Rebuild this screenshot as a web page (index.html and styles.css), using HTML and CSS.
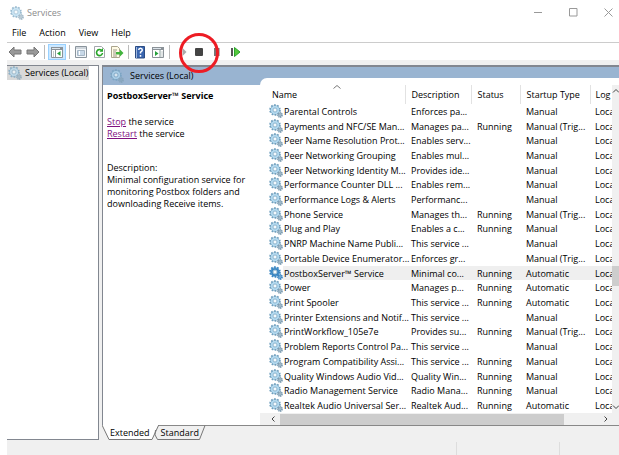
FILE: index.html
```html
<!DOCTYPE html>
<html lang="en">
<head>
  <meta charset="UTF-8" />
  <meta name="viewport" content="width=device-width, initial-scale=1.0"/>
  <title>Services</title>
  <link rel="stylesheet" href="styles.css">
</head>
<body>

<svg class="symbols" aria-hidden="true">
  <symbol id="gear" viewBox="0 0 14 14">
    <circle class="teeth" cx="6" cy="6" r="4.9" fill="none" stroke-width="1.8" stroke-dasharray="1.7 1.38"/>
    <circle class="teeth" cx="6" cy="6" r="4.3" fill="none" stroke-width=".8"/>
    <circle class="ring" cx="6" cy="6" r="3.2" fill="none" stroke-width="1.8"/>
    <circle class="hole" cx="6" cy="6" r="2"/>
    <circle class="small" cx="11" cy="11" r="2" fill="none" stroke-width="1.8" stroke-dasharray="1.2 .4"/>
    <circle class="small" cx="11" cy="11" r="1.1" fill="none" stroke-width="1"/>
  </symbol>
</svg>

<div class="window">
  <header class="title-bar">
    <svg class="gear pale"><use href="#gear"/></svg>
    <h1>Services</h1>
    <div class="window-buttons">
      <button aria-label="Minimize"><svg viewBox="0 0 9 9"><path d="M0 4.5h8"/></svg></button>
      <button aria-label="Maximize"><svg viewBox="0 0 9 9"><path d="M.5.5h7.500v7.500h-7.500z"/></svg></button>
      <button aria-label="Close"><svg viewBox="0 0 9 9"><path d="M.5.5l8 8M8.500.5l-8 8"/></svg></button>
    </div>
  </header>

  <nav class="menu">
    <button>File</button>
    <button>Action</button>
    <button>View</button>
    <button>Help</button>
  </nav>

  <div class="toolbar">
    <button aria-label="Back"><svg viewBox="0 0 14 14"><path d="M1 7l5-5v3h7v4H6v3z" fill="#999" stroke="#777"/></svg></button>
    <button aria-label="Forward"><svg viewBox="0 0 14 14"><path d="M13 7L8 2v3H1v4h7v3z" fill="#999" stroke="#777"/></svg></button>
    <span class="sep"></span>
    <button class="active" aria-label="Show console tree"><svg viewBox="0 0 14 14"><path d="M1.500 2.500h11v10h-11z" fill="#fff" stroke="#8b9298"/><path d="M1 2h12v3H1z" fill="#8b9298"/><path d="M2 3.500h8" stroke="#dce4ea"/><path d="M5.500 5v7M3 7h1M3 9h1M3 11h1" stroke="#899"/><path d="M10.500 6v5L7 8.500z" fill="#25a13b"/></svg></button>
    <span class="sep"></span>
    <button aria-label="Properties"><svg viewBox="0 0 14 14"><path d="M1.500 1.500h11v11h-11z" fill="#f5f8fb" stroke="#8a949c"/><path d="M2 3h10" stroke="#a8b2bb"/><path d="M3.500 5.500h7v5h-7z" fill="#fff" stroke="#a5b6c5"/><path d="M4 7h1m1 0h4M4 9h1m1 0h4" stroke="#8fb0cf"/></svg></button>
    <button aria-label="Refresh"><svg viewBox="0 0 14 14"><path d="M2.500 1.500h7l3 3v8h-10z" fill="#fff" stroke="#a4a8ac"/><path d="M9.500 5.300A3 3 0 1 0 10.500 8" fill="none" stroke="#28a528" stroke-width="1.600"/><path d="M7.500 6.800h3.500V3z" fill="#28a528"/></svg></button>
    <button aria-label="Export list"><svg viewBox="0 0 14 14"><path d="M1.500 1.500h6l2 2v9h-8z" fill="#fffbe6" stroke="#aaa48d"/><path d="M3 5h4M3 7h3M3 9h3M3 11h4" stroke="#9a958a"/><path d="M6 7h4V4.500L13.500 8 10 11.500V9.500H6z" fill="#42b33d"/></svg></button>
    <span class="sep"></span>
    <button aria-label="Help"><svg viewBox="0 0 14 14"><path d="M2.500 1.500h9v11.500h-9z" fill="#3a66b0" stroke="#2c4c83"/><path d="M3.500 2v11" stroke="#9fb6dc"/><path d="M5.700 5Q5.800 3.200 7.500 3.200T9.300 5Q9.300 6.200 7.500 7.200V8.500M7.500 10v1.700" fill="none" stroke="#fff" stroke-width="1.500"/></svg></button>
    <button aria-label="Show action pane"><svg viewBox="0 0 14 14"><path d="M1.500 2.500h11v10h-11z" fill="#fff" stroke="#8b9298"/><path d="M1 2h12v3H1z" fill="#8b9298"/><path d="M2 3.500h8" stroke="#dce4ea"/><path d="M9 5v7M10.500 7h1M10.500 9h1M10.500 11h1" stroke="#899"/><path d="M4 6v5l3.500-2.500z" fill="#25a13b"/></svg></button>
    <span class="sep"></span>
    <button aria-label="Start service"><svg viewBox="0 0 14 14"><path d="M8.500 3v8l4-4z" fill="#aaa"/></svg></button>
    <button aria-label="Stop service" class="stop"><svg viewBox="0 0 14 14"><rect x="3" y="3" width="8" height="8" rx="1" fill="#444"/></svg><span class="mark"></span></button>
    <button aria-label="Pause service"><svg viewBox="0 0 14 14"><path d="M5 3v8M8.500 3v8" stroke="#777" stroke-width="2"/></svg></button>
    <button aria-label="Restart service"><svg viewBox="0 0 14 14"><path d="M4 3v8" stroke="#555" stroke-width="2"/><path d="M6.500 2.500v9L12 7z" fill="#55c93c" stroke="#2ca32c"/></svg></button>
  </div>

  <main class="console">
    <aside class="tree">
      <div class="tree-item"><svg class="gear pale"><use href="#gear"/></svg>Services (Local)</div>
    </aside>

    <section class="content">
      <div class="view">
        <div class="banner"><svg class="gear pale"><use href="#gear"/></svg>Services (Local)</div>
        <div class="details">
          <h2>PostboxServer™ Service</h2>
          <p class="actions"><a href="#">Stop</a> the service<br><a href="#">Restart</a> the service</p>
          <p>Description:<br>Minimal configuration service for monitoring Postbox folders and downloading Receive items.</p>
        </div>

        <div class="list">
          <div class="list-body">
            <div class="rows">
              <table>
                <colgroup>
                  <col class="col-name"><col class="col-desc"><col class="col-status"><col class="col-type"><col>
                </colgroup>
                <thead>
                  <tr><th>Name<svg class="sort" viewBox="0 0 8 4"><path d="M.5 3.500L4 .5l3.500 3"/></svg></th><th>Description</th><th>Status</th><th>Startup Type</th><th>Log</th></tr>
                </thead>
                <tbody>
                  <tr><td><svg class="gear"><use href="#gear"/></svg>Parental Controls</td><td>Enforces pa...</td><td></td><td>Manual</td><td>Loca</td></tr>
                  <tr><td><svg class="gear"><use href="#gear"/></svg>Payments and NFC/SE Man...</td><td>Manages pa...</td><td>Running</td><td>Manual (Trig...</td><td>Loca</td></tr>
                  <tr><td><svg class="gear"><use href="#gear"/></svg>Peer Name Resolution Prot...</td><td>Enables serv...</td><td></td><td>Manual</td><td>Loca</td></tr>
                  <tr><td><svg class="gear"><use href="#gear"/></svg>Peer Networking Grouping</td><td>Enables mul...</td><td></td><td>Manual</td><td>Loca</td></tr>
                  <tr><td><svg class="gear"><use href="#gear"/></svg>Peer Networking Identity M...</td><td>Provides ide...</td><td></td><td>Manual</td><td>Loca</td></tr>
                  <tr><td><svg class="gear"><use href="#gear"/></svg>Performance Counter DLL ...</td><td>Enables rem...</td><td></td><td>Manual</td><td>Loca</td></tr>
                  <tr><td><svg class="gear"><use href="#gear"/></svg>Performance Logs &amp; Alerts</td><td>Performanc...</td><td></td><td>Manual</td><td>Loca</td></tr>
                  <tr><td><svg class="gear"><use href="#gear"/></svg>Phone Service</td><td>Manages th...</td><td>Running</td><td>Manual (Trig...</td><td>Loca</td></tr>
                  <tr><td><svg class="gear"><use href="#gear"/></svg>Plug and Play</td><td>Enables a c...</td><td>Running</td><td>Manual</td><td>Loca</td></tr>
                  <tr><td><svg class="gear"><use href="#gear"/></svg>PNRP Machine Name Publi...</td><td>This service ...</td><td></td><td>Manual</td><td>Loca</td></tr>
                  <tr><td><svg class="gear"><use href="#gear"/></svg>Portable Device Enumerator...</td><td>Enforces gr...</td><td></td><td>Manual (Trig...</td><td>Loca</td></tr>
                  <tr class="selected"><td><svg class="gear"><use href="#gear"/></svg>PostboxServer™ Service</td><td>Minimal co...</td><td>Running</td><td>Automatic</td><td>Loca</td></tr>
                  <tr><td><svg class="gear"><use href="#gear"/></svg>Power</td><td>Manages p...</td><td>Running</td><td>Automatic</td><td>Loca</td></tr>
                  <tr><td><svg class="gear"><use href="#gear"/></svg>Print Spooler</td><td>This service ...</td><td>Running</td><td>Automatic</td><td>Loca</td></tr>
                  <tr><td><svg class="gear"><use href="#gear"/></svg>Printer Extensions and Notif...</td><td>This service ...</td><td></td><td>Manual</td><td>Loca</td></tr>
                  <tr><td><svg class="gear"><use href="#gear"/></svg>PrintWorkflow_105e7e</td><td>Provides su...</td><td>Running</td><td>Manual (Trig...</td><td>Loca</td></tr>
                  <tr><td><svg class="gear"><use href="#gear"/></svg>Problem Reports Control Pa...</td><td>This service ...</td><td></td><td>Manual</td><td>Loca</td></tr>
                  <tr><td><svg class="gear"><use href="#gear"/></svg>Program Compatibility Assi...</td><td>This service ...</td><td>Running</td><td>Manual</td><td>Loca</td></tr>
                  <tr><td><svg class="gear"><use href="#gear"/></svg>Quality Windows Audio Vid...</td><td>Quality Win...</td><td>Running</td><td>Manual</td><td>Loca</td></tr>
                  <tr><td><svg class="gear"><use href="#gear"/></svg>Radio Management Service</td><td>Radio Mana...</td><td>Running</td><td>Manual</td><td>Loca</td></tr>
                  <tr><td><svg class="gear"><use href="#gear"/></svg>Realtek Audio Universal Ser...</td><td>Realtek Aud...</td><td>Running</td><td>Automatic</td><td>Loca</td></tr>
                </tbody>
              </table>
            </div>
            <div class="v-scroll">
              <svg viewBox="0 0 8 6"><path d="M1 4.500L4 1.500l3 3"/></svg>
              <span class="track"><span class="thumb"></span></span>
              <svg viewBox="0 0 8 6"><path d="M1 1.500l3 3 3-3"/></svg>
            </div>
          </div>
          <div class="h-scroll">
            <svg viewBox="0 0 6 8"><path d="M4.500 1.500L2 4l2.500 2.500"/></svg>
            <span class="track"><span class="thumb"></span></span>
            <svg viewBox="0 0 6 8"><path d="M1.500 1.500L4 4 1.500 6.500"/></svg>
          </div>
        </div>
      </div>

      <div class="tabs">
        <svg class="tab-shape" viewBox="0 0 106 15"><path d="M0 0l7 14.500h43L56 0z" fill="#fff"/><path d="M0 0l7 14.500h43L56.500.5M53.500 5q-2 5 2 9.500h42L103 .5" fill="none" stroke="#777"/></svg>
        <button>Extended</button>
        <button>Standard</button>
      </div>
    </section>
  </main>

  <footer class="status-bar"><span></span><span></span><span></span></footer>
</div>

</body>
</html>
```

FILE: styles.css
```css
:root {
  --face: #f0f0f0;
  --line: #828790;
  --banner: #99b4d1;
  --thumb: #cdcdcd;
}

* {
  box-sizing: border-box;
}

body {
  margin: 0;
  background: #fff;
  color: #000;
  font-family: 'Open Sans', 'Noto Sans', sans-serif;
  font-size: 9px;
  line-height: 12px;
}

h1, h2, p {
  margin: 0;
  font-size: 9px;
}

button {
  padding: 0;
  border: none;
  background: none;
  color: inherit;
  font: inherit;
}

svg {
  display: block;
  flex: none;
}

.symbols {
  position: absolute;
  width: 0;
  height: 0;
}

.window {
  display: flex;
  flex-direction: column;
  height: 100vh;
  padding-left: 7px;
}

/* gear icon */
.gear {
  width: 14px;
  height: 14px;
}

.teeth { stroke: var(--dark, #6f9fbe); }
.ring { stroke: var(--dark, #b0d8ef); }
.hole { fill: #f4fafd; stroke: #6799ba; stroke-width: 0.7px; }
.small { stroke: var(--dark, #7f9fb4); }

.pale {
  opacity: 0.7;
}

/* title and menu */
.title-bar {
  display: flex;
  align-items: center;
  gap: 3px;
  height: 25px;
  padding-left: 3px;
}

.title-bar h1 {
  font-weight: normal;
  color: #8c8c8c;
}

.window-buttons {
  display: flex;
  gap: 26px;
  margin-left: auto;
  padding-right: 6px;
}

.window-buttons svg {
  width: 9px;
  height: 9px;
  fill: none;
  stroke: #999;
}

.menu {
  display: flex;
  gap: 13px;
  height: 17px;
  padding-left: 5px;
}

.menu button {
  height: 16px;
}

.toolbar {
  display: flex;
  align-items: center;
  gap: 4px;
  height: 18px;
  padding-left: 1px;
  border-top: 1px solid #ccc;
}

.toolbar svg {
  width: 14px;
  height: 14px;
}

.toolbar .active {
  margin: 0 -1px;
  padding: 1px 2px;
  background: #cce8ff;
  outline: 1px solid #99d1ff;
  outline-offset: -1px;
}

.sep {
  width: 1px;
  height: 14px;
  background: #bbb;
}

.stop {
  position: relative;
}

.mark {
  position: absolute;
  top: -12px;
  left: -13px;
  z-index: 2;
  width: 40px;
  height: 40px;
  border: 3px solid #ed1c24;
  border-radius: 50%;
}

/* console */
.console {
  display: flex;
  gap: 3px;
  flex: 1;
  min-height: 0;
  padding-top: 5px;
  background: var(--face);
}

.tree {
  width: 92px;
  background: #fff;
  border: 1px solid var(--line);
  border-left: none;
}

.tree-item {
  display: flex;
  align-items: center;
  gap: 3px;
  width: 82px;
  height: 14px;
  padding-left: 1px;
  background: #d9d9d9;
  white-space: nowrap;
}

.content {
  display: flex;
  flex-direction: column;
  flex: 1;
  min-width: 0;
}

.view {
  display: grid;
  grid-template-columns: 157px 1fr;
  grid-template-rows: 11px 7px 1fr;
  flex: 1;
  min-height: 0;
  background: #fff;
  border-top: 2px solid var(--line);
  border-left: 1px solid var(--line);
}

.banner {
  grid-area: 1 / 1 / 3 / 3;
  display: flex;
  align-items: center;
  gap: 6px;
  padding-left: 7px;
  background: var(--banner);
}

.details {
  grid-area: 3 / 1;
  padding: 5px 10px 0 4px;
}

.details p {
  margin-top: 14px;
}

.details .actions {
  margin-bottom: 22px;
}

.details a {
  color: #80107f;
}

.list {
  grid-area: 2 / 2 / 4 / 3;
  display: flex;
  flex-direction: column;
  min-width: 0;
  background: #fff;
  border-top-left-radius: 7px;
}

.list-body {
  display: flex;
  flex: 1;
  min-height: 0;
  padding-top: 7px;
}

.rows {
  flex: 1;
  min-width: 0;
  overflow: hidden;
}

table {
  width: 100%;
  height: 100%;
  table-layout: fixed;
  border-collapse: collapse;
}

.col-name { width: 145px; }
.col-desc { width: 66px; }
.col-status { width: 49px; }
.col-type { width: 70px; }

th, td {
  padding: 1px 0 0 6px;
  text-align: left;
  font-weight: normal;
  white-space: nowrap;
}

th {
  position: relative;
  height: 19px;
  border-right: 1px solid #e2e2e2;
}

th:first-child {
  padding-left: 12px;
}

th:last-child,
td:last-child {
  padding-left: 5px;
  border-right: none;
}

td:first-child {
  padding-left: 24px;
}

td .gear {
  float: left;
  margin: -2px 0 0 -15px;
}

.sort {
  position: absolute;
  top: 0;
  left: 73px;
  width: 8px;
  height: 4px;
  fill: none;
  stroke: #777;
}

.selected td {
  background: #efefef;
}

.selected td:first-child {
  background: linear-gradient(to right, #fff 23px, #efefef 23px);
}

.selected .gear {
  --dark: #3a86c2;
}

/* scroll bars */
.v-scroll,
.h-scroll {
  display: flex;
  flex: none;
  background: var(--face);
}

.v-scroll svg,
.h-scroll svg {
  fill: none;
  stroke: #444;
}

.v-scroll {
  flex-direction: column;
  width: 7px;
  padding: 3px 0;
  overflow: hidden;
}

.v-scroll svg {
  width: 8px;
  height: 6px;
}

.track {
  display: flex;
  flex: 1;
}

.v-scroll .thumb {
  width: 100%;
  height: 20px;
  align-self: flex-end;
  margin-bottom: 118px;
  background: var(--thumb);
}

.h-scroll {
  align-items: center;
  gap: 4px;
  height: 12px;
  padding: 0 10px 0 10px;
}

.h-scroll svg {
  width: 6px;
  height: 8px;
}

.h-scroll .thumb {
  width: 89%;
  height: 11px;
  background: var(--thumb);
}

/* tabs under the view */
.tabs {
  position: relative;
  display: flex;
  gap: 11px;
  height: 15px;
  padding: 1px 0 0 8px;
  background: linear-gradient(#888, #888) 56px 0 / 100% 1px no-repeat;
}

.tabs button {
  z-index: 1;
}

.tab-shape {
  position: absolute;
  top: 0;
  left: 0;
  width: 106px;
  height: 15px;
}

.status-bar {
  display: flex;
  height: 15px;
  padding-top: 2px;
  background: var(--face);
}

.status-bar span {
  width: 103px;
  border-right: 1px solid #ddd;
}

.status-bar span:first-child {
  flex: 1;
}

.status-bar span:last-child {
  width: 59px;
  border-right: none;
}
```
